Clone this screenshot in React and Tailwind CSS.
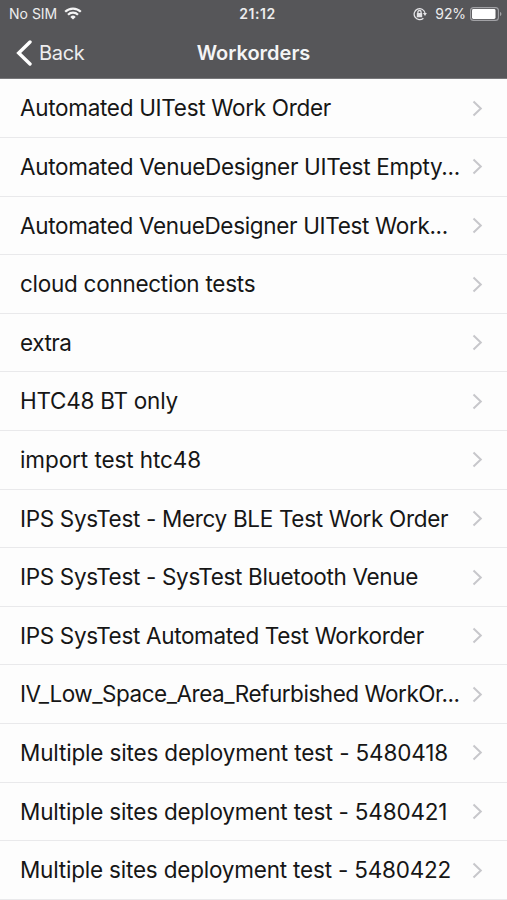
import React from 'react';

const workorders = [
  { name: 'Automated UITest Work Order', tracking: 'tracking-[-0.3px]' },
  { name: 'Automated VenueDesigner UITest Empty...', tracking: 'tracking-[-0.29px]' },
  { name: 'Automated VenueDesigner UITest Work...', tracking: 'tracking-[-0.33px]' },
  { name: 'cloud connection tests', tracking: 'tracking-[-0.27px]' },
  { name: 'extra', tracking: 'tracking-[-0.45px]' },
  { name: 'HTC48 BT only', tracking: 'tracking-[-0.25px]' },
  { name: 'import test htc48', tracking: 'tracking-[-0.08px]' },
  { name: 'IPS SysTest - Mercy BLE Test Work Order', tracking: 'tracking-[-0.33px]' },
  { name: 'IPS SysTest - SysTest Bluetooth Venue', tracking: 'tracking-[-0.33px]' },
  { name: 'IPS SysTest Automated Test Workorder', tracking: 'tracking-[-0.33px]' },
  { name: 'IV_Low_Space_Area_Refurbished WorkOr...', tracking: 'tracking-[-0.47px]' },
  { name: 'Multiple sites deployment test - 5480418', tracking: 'tracking-[-0.16px]' },
  { name: 'Multiple sites deployment test - 5480421', tracking: 'tracking-[-0.18px]' },
  { name: 'Multiple sites deployment test - 5480422', tracking: 'tracking-[-0.2px]' },
];

const WifiIcon = () => (
  <svg width="18" height="13" viewBox="0 0 18 13" fill="none" stroke="#f4f4f5" strokeWidth="2.2">
    <path d="M1.2 4.8a11 11 0 0 1 15.6 0" />
    <path d="M4 7.8a7 7 0 0 1 10 0" />
    <path d="M9 12.6 6.3 9.900a3.800 3.800 0 0 1 5.400 0Z" fill="#f4f4f5" stroke="none" />
  </svg>
);

const RotationLockIcon = () => (
  <svg width="14" height="14" viewBox="0 0 14 14" fill="none" stroke="#e4e4e7" strokeWidth="1.3">
    <path d="M10.400 11.200A5.500 5.500 0 1 1 12 5.800" />
    <path d="M9.900 6.100h4l-1.900 2.900Z" fill="#e4e4e7" stroke="none" />
    <rect x="3.800" y="6" width="5.400" height="4.200" rx="0.500" fill="#e4e4e7" stroke="none" />
    <path d="M4.900 6.400V5.100a1.600 1.600 0 0 1 3.200 0v1.300" />
  </svg>
);

const BatteryIcon = () => (
  <svg width="32" height="14" viewBox="0 0 32 14" fill="none">
    <rect x="0.600" y="0.600" width="27.800" height="12.800" rx="3" stroke="#a1a1a5" strokeWidth="1.1" />
    <rect x="2" y="2" width="23.500" height="10" rx="1.400" fill="#fff" />
    <path d="M30 5v4c.9-.3 1.400-1.100 1.400-2S30.900 5.300 30 5Z" fill="#a1a1a5" />
  </svg>
);

const StatusBar = () => (
  <div className="grid h-[27px] grid-cols-3 items-center pr-[5px] pl-[9px] text-sm text-[#ededee]">
    <div className="flex items-center gap-[7px]">
      <span>No SIM</span>
      <WifiIcon />
    </div>
    <span className="pl-1 text-center font-semibold tracking-[0.5px]">21:12</span>
    <div className="flex items-center justify-end">
      <RotationLockIcon />
      <span className="mr-1 ml-2 tracking-[-0.1px]">92%</span>
      <BatteryIcon />
    </div>
  </div>
);

const NavBar = () => (
  <div className="grid h-[51px] grid-cols-3 items-center">
    <button className="flex items-center gap-[7px] pl-4 text-xl text-[#ededee]">
      <svg width="16" height="26" viewBox="0 0 16 26" fill="none" stroke="#fff" strokeWidth="3.4" strokeLinecap="round">
        <path d="M14 2 2.700 13 14 24" />
      </svg>
      <span className="tracking-[-0.3px]">Back</span>
    </button>
    <h1 className="text-center text-xl font-semibold text-[#f4f4f5]">Workorders</h1>
  </div>
);

const WorkorderRow = ({ name, tracking }) => (
  <li className="flex h-[58.6px] items-center justify-between border-b border-[#e9e9eb] pr-6 pl-5">
    <span className={`text-[22.5px] whitespace-nowrap text-[#161616] ${tracking}`}>{name}</span>
    <svg className="shrink-0" width="11" height="17" viewBox="0 0 11 17" fill="none" stroke="#c7c7cb" strokeWidth="2">
      <path d="M1.500 1.500 8.800 8.500 1.500 15.500" />
    </svg>
  </li>
);

const App = () => (
  <div className="h-[900px] w-full overflow-hidden bg-[#fdfdfd] font-['Inter',sans-serif]">
    <header className="h-[79px] border-b border-[#77777a] bg-[#565659]">
      <StatusBar />
      <NavBar />
    </header>
    <ul className="pt-[0.5px]">
      {workorders.map((order) => (
        <WorkorderRow key={order.name} name={order.name} tracking={order.tracking} />
      ))}
    </ul>
  </div>
);

export default App;
